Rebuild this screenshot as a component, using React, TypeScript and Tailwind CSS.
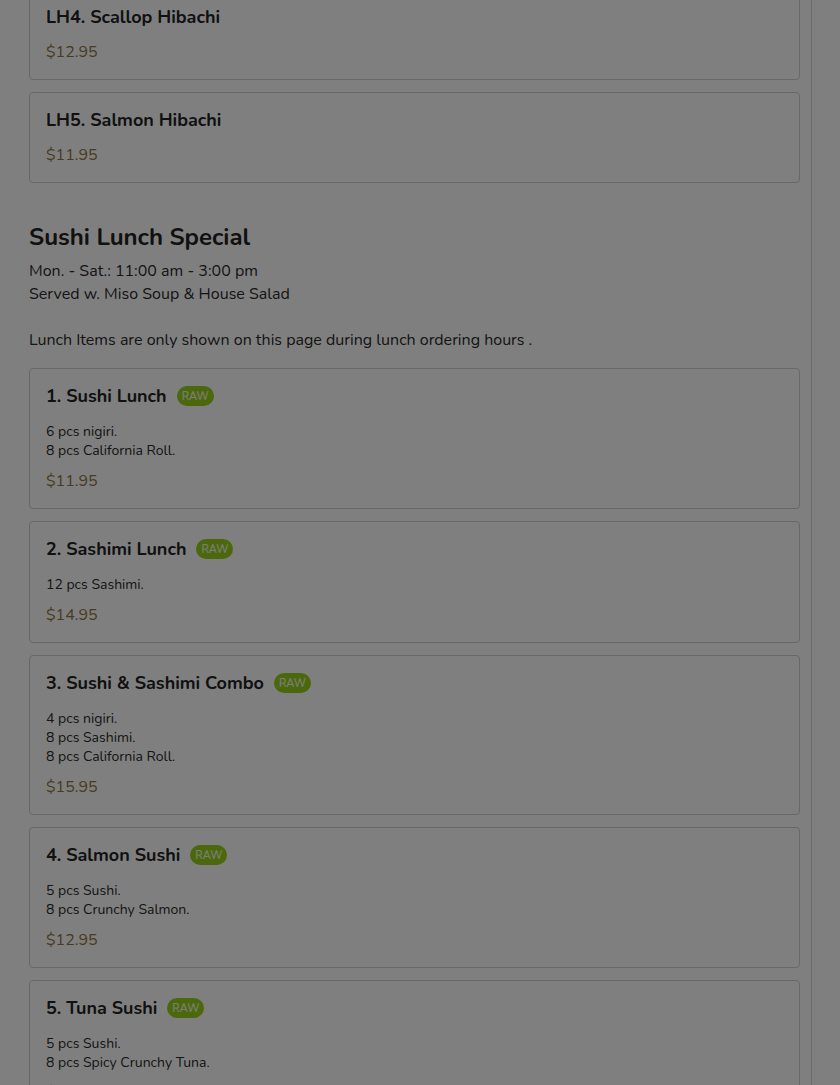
const font = { fontFamily: '"Nunito", "Lato", "Noto Sans", sans-serif' };

type Item = { name: string; price: string; lines?: string[]; raw?: boolean };

const hibachi: Item[] = [
  { name: 'LH4. Scallop Hibachi', price: '$12.95' },
  { name: 'LH5. Salmon Hibachi', price: '$11.95' },
];

const sushi: Item[] = [
  { name: '1. Sushi Lunch', raw: true, lines: ['6 pcs nigiri.', '8 pcs California Roll.'], price: '$11.95' },
  { name: '2. Sashimi Lunch', raw: true, lines: ['12 pcs Sashimi.'], price: '$14.95' },
  {
    name: '3. Sushi & Sashimi Combo',
    raw: true,
    lines: ['4 pcs nigiri.', '8 pcs Sashimi.', '8 pcs California Roll.'],
    price: '$15.95',
  },
  { name: '4. Salmon Sushi', raw: true, lines: ['5 pcs Sushi.', '8 pcs Crunchy Salmon.'], price: '$12.95' },
  { name: '5. Tuna Sushi', raw: true, lines: ['5 pcs Sushi.', '8 pcs Spicy Crunchy Tuna.'], price: '$13.95' },
];

function ItemCard({ item }: { item: Item }) {
  return (
    <div className="mb-3 rounded-[4px] border border-[#cfcfcf] bg-white px-4 pt-[15px] pb-[15px]">
      <div className="flex items-center gap-[10px]">
        <h3 className="text-[18px] font-bold leading-6 text-[#222]">{item.name}</h3>
        {item.raw && (
          <span className="rounded-full bg-[#96d018] px-[5px] pt-[4px] pb-[2px] text-[11px] font-semibold leading-[14px] text-[#f4fae6]">
            RAW
          </span>
        )}
      </div>
      {item.lines && (
        <div className="mt-[14px] text-[14px] leading-[19px] text-[#2a2a2a]">
          {item.lines.map((l) => (
            <p key={l}>{l}</p>
          ))}
        </div>
      )}
      <p className={`${item.lines ? 'mt-[9px]' : 'mt-[11px]'} text-[16px] leading-6 text-[#8f7640]`}>{item.price}</p>
    </div>
  );
}

export default function App() {
  return (
    <div className="relative h-[1085px] overflow-hidden bg-white" style={font}>
      <div className="w-[812px] border-r border-[#d8d8d8] pl-[29px] pr-[11px]">
        <div className="-mt-[11px]">
          {hibachi.map((it) => (
            <ItemCard key={it.name} item={it} />
          ))}
        </div>

        <section className="pt-[26px]">
          <h2 className="text-[24px] font-bold leading-8 text-[#222]">Sushi Lunch Special</h2>
          <div className="mt-[7px] text-[16px] leading-[23px] text-[#2a2a2a]">
            <p>Mon. - Sat.: 11:00 am - 3:00 pm</p>
            <p>Served w. Miso Soup &amp; House Salad</p>
            <p>&nbsp;</p>
            <p>Lunch Items are only shown on this page during lunch ordering hours .</p>
          </div>
          <div className="mt-[16px]">
            {sushi.map((it) => (
              <ItemCard key={it.name} item={it} />
            ))}
          </div>
        </section>
      </div>

      <div className="absolute inset-0 bg-black/50" />
    </div>
  );
}
